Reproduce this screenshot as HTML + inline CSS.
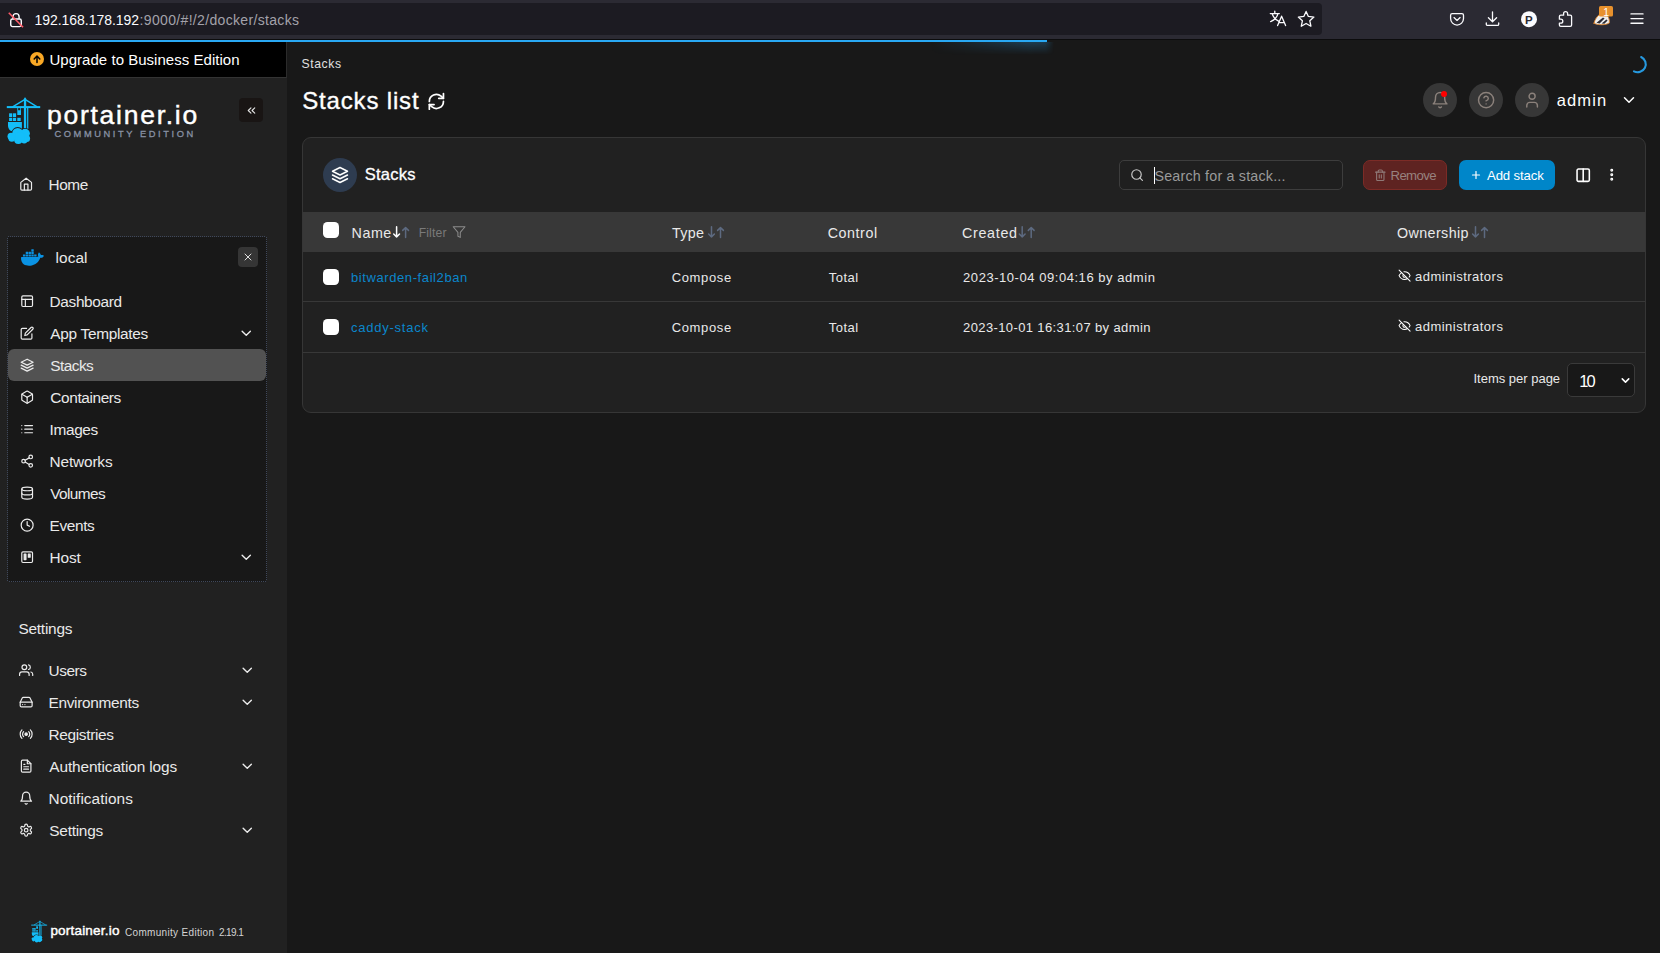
<!DOCTYPE html>
<html lang="en"><head><meta charset="utf-8"><title>Portainer | Stacks</title>
<style>
html,body{margin:0;padding:0;background:#181818;}
body{width:1660px;height:953px;position:relative;overflow:hidden;font-family:"Liberation Sans",sans-serif;color:#fff;}
.t{position:absolute;white-space:nowrap;line-height:30px;height:30px;}
.ic{position:absolute;display:block;overflow:visible;}
.b{position:absolute;box-sizing:border-box;}
</style></head><body>

<div class="b" style="left:0;top:0;width:1660px;height:40px;background:#2b2a33;border-bottom:1px solid #0c0c0d"></div>
<div class="b" style="left:0;top:3px;width:1322px;height:32px;background:#1c1b22;border-radius:0 4px 4px 0"></div>
<svg class="ic" style="left:7.3px;top:10.6px;width:17.6px;height:17.6px" viewBox="0 0 16 16" fill="none"><rect x="3.4" y="7.2" width="9.6" height="7" rx="1.6" stroke="#fbfbfe" stroke-width="1.3"/><path d="M5.4 7V5.2a2.8 2.8 0 0 1 5.6 0V7" stroke="#fbfbfe" stroke-width="1.3"/><line x1="1.6" y1="1.6" x2="14.6" y2="14.8" stroke="#ff5a68" stroke-width="1.4"/></svg>
<div class="t" style="left:34.5px;top:4.5px;font-size:14px;color:#fbfbfe;letter-spacing:-0.036px;">192.168.178.192</div>
<div class="t" style="left:139.6px;top:4.5px;font-size:14px;color:#a3a2aa;letter-spacing:0.332px;">:9000/#!/2/docker/stacks</div>
<svg class="ic" style="left:1260px;top:0;width:400px;height:40px" viewBox="1260 0 400 40" fill="none" stroke="#fbfbfe" stroke-width="1.3" stroke-linecap="round" stroke-linejoin="round"><path d="M1270.3 13.6H1279.3M1274.8 11.2V13.6M1277.9 13.6C1277.2 17 1274.6 19.9 1270.6 21.6M1272.2 13.8C1273 16.6 1275.3 19.6 1278.6 21.2"/><path d="M1277.6 25.6L1281.6 16.2L1285.6 25.6M1279 22.6H1284.2"/><path d="M1306.10 11.40L1308.39 16.44L1313.90 17.07L1309.81 20.81L1310.92 26.23L1306.10 23.50L1301.28 26.23L1302.39 20.81L1298.30 17.07L1303.81 16.44Z"/><path d="M1452.2 13.6H1461.9A1.6 1.6 0 0 1 1463.5 15.2V18.6A6.45 6.45 0 0 1 1450.6 18.6V15.2A1.6 1.6 0 0 1 1452.2 13.6Z"/><path d="M1454 17.6L1457.05 20.4L1460.1 17.6"/><path d="M1492.5 11.8V21.6M1488.4 17.8L1492.5 21.8L1496.6 17.8M1486.3 23V24.2A1.2 1.2 0 0 0 1487.5 25.4H1497.5A1.2 1.2 0 0 0 1498.7 24.2V23"/><circle cx="1529" cy="19.2" r="8" fill="#fbfbfe" stroke="none"/><path d="M1563.6 15.2V13.6A2 2 0 0 1 1567.6 13.6V15.2H1570.2A1.4 1.4 0 0 1 1571.6 16.6V25A1.4 1.4 0 0 1 1570.2 26.4H1560.8A1.4 1.4 0 0 1 1559.4 25V23.2H1560.8A2 2 0 0 0 1560.8 19.2H1559.4V16.6A1.4 1.4 0 0 1 1560.8 15.2Z"/><path d="M1594 23.2C1594.5 20 1597.5 15.5 1600 14.2L1607.5 15.5C1609 17.5 1609.6 20.5 1609.3 23C1606 25.2 1598 25.4 1594 23.2Z" stroke="#d9822b" stroke-width="0.9" fill="#efefef"/><path d="M1596.5 22.8L1603 17.4L1604.6 18.6L1599.6 23.6Z M1601.6 23.6L1606.4 19.4L1607.6 20.6L1604.4 23.8Z" fill="#2b2a33" stroke="none"/><rect x="1599" y="6" width="14" height="10.6" rx="1.6" fill="#e8912d" stroke="none"/><path d="M1631 13.9H1643M1631 18.6H1643M1631 23.2H1643" stroke-width="1.4"/></svg><div class="t" style="left:1525.1px;top:4.6px;font-size:11.5px;color:#2b2a33;font-weight:700;">P</div><div class="t" style="left:1603.2px;top:-3.5px;font-size:10.5px;color:#fff;">1</div>
<div class="b" style="left:0;top:40px;width:1047px;height:2px;background:#29a8f3"></div>
<div class="b" style="left:930px;top:42px;width:124px;height:13px;background:linear-gradient(to right, rgba(41,160,235,0), rgba(41,160,235,.10) 30%, rgba(41,160,235,.30) 80%, rgba(41,160,235,.28) 93%, rgba(41,160,235,0) 100%);-webkit-mask-image:linear-gradient(to bottom, rgba(0,0,0,.9), rgba(0,0,0,.45) 45%, rgba(0,0,0,0));mask-image:linear-gradient(to bottom, rgba(0,0,0,.9), rgba(0,0,0,.45) 45%, rgba(0,0,0,0))"></div>
<div class="b" style="left:0;top:42px;width:287px;height:911px;background:#212121"></div>
<div class="b" style="left:0;top:42px;width:287px;height:36px;background:#000;border-bottom:1px solid #333;border-right:1px solid #2b2b2b"></div>
<svg class="ic" style="left:30px;top:52px;width:14px;height:14px" viewBox="0 0 24 24"><circle cx="12" cy="12" r="12" fill="#f9a825"/><path d="M12 18V7.5M7.2 12 12 7 16.8 12" fill="none" stroke="#000" stroke-width="2.6" stroke-linecap="round" stroke-linejoin="round"/></svg>
<div class="t" style="left:49.5px;top:44.5px;font-size:15px;color:#fff;letter-spacing:0.028px;">Upgrade to Business Edition</div>
<svg class="ic" style="left:0;top:92px;width:60px;height:58px" viewBox="0 92 60 58"><rect x="23.9" y="98.6" width="2.3" height="29.6" fill="#13bef9"/><rect x="24.2" y="97.7" width="1.7" height="1.5" fill="#13bef9"/><rect x="27.1" y="107.5" width="1.2" height="21.4" fill="#13bef9"/><rect x="6.8" y="106.1" width="33.4" height="2" fill="#13bef9"/><path d="M25 99.3 L12.6 106.8 M25 99.3 L37.2 106.8" stroke="#13bef9" stroke-width="1.35" fill="none"/><path d="M17.3 108H18.1V110.2H20.3V108H21V114.9H17.3Z" fill="#13bef9"/><rect x="9.1" y="113.3" width="3.1" height="3.7" fill="#13bef9"/><rect x="12.9" y="113.3" width="3.2" height="3.7" fill="#13bef9"/><rect x="9.1" y="117.8" width="3.1" height="3.2" fill="#13bef9"/><rect x="12.9" y="117.8" width="3.2" height="3.2" fill="#13bef9"/><rect x="17.3" y="117.8" width="3.4" height="3.2" fill="#13bef9"/><path d="M8 122.1H21.9V127.5C21.9 130 20 131.5 17 131.5H13.5C10 131.5 8 128.5 8 125.5Z" fill="#13bef9"/><circle cx="11" cy="136.2" r="4.4" fill="#212121"/><circle cx="17.7" cy="133.5" r="6.4" fill="#212121"/><circle cx="25.2" cy="133.5" r="5.6000000000000005" fill="#212121"/><circle cx="26.6" cy="138.4" r="4.4" fill="#212121"/><circle cx="18.3" cy="140" r="5.0" fill="#212121"/><circle cx="24.2" cy="140" r="4.3" fill="#212121"/><circle cx="11.8" cy="138.4" r="4.2" fill="#212121"/><circle cx="20" cy="137" r="5.9" fill="#212121"/><circle cx="11" cy="136.2" r="3.5" fill="#13bef9"/><circle cx="17.7" cy="133.5" r="5.5" fill="#13bef9"/><circle cx="25.2" cy="133.5" r="4.7" fill="#13bef9"/><circle cx="26.6" cy="138.4" r="3.5" fill="#13bef9"/><circle cx="18.3" cy="140" r="4.1" fill="#13bef9"/><circle cx="24.2" cy="140" r="3.4" fill="#13bef9"/><circle cx="11.8" cy="138.4" r="3.3" fill="#13bef9"/><circle cx="20" cy="137" r="5" fill="#13bef9"/></svg>
<div class="t" style="left:47px;top:99.5px;font-size:26.5px;color:#fff;letter-spacing:1.734px;-webkit-text-stroke:0.45px #fff;">portainer.io</div>
<div class="t" style="left:54.5px;top:118.5px;font-size:9.3px;color:#8891a4;letter-spacing:2.578px;-webkit-text-stroke:0.3px #8891a4;">COMMUNITY EDITION</div>
<div class="b" style="left:239px;top:98px;width:24px;height:24px;background:#191514;border-radius:4px"></div>
<svg class="ic" style="left:244.5px;top:103.5px;width:13px;height:13px;color:#e6e6e6" viewBox="0 0 24 24" fill="none" stroke="currentColor" stroke-width="2" stroke-linecap="round" stroke-linejoin="round"><polyline points="11 17 6 12 11 7"/><polyline points="18 17 13 12 18 7"/></svg>
<svg class="ic" style="left:18.55px;top:176.85px;width:14.3px;height:14.3px;color:#ececec" viewBox="0 0 24 24" fill="none" stroke="currentColor" stroke-width="2" stroke-linecap="round" stroke-linejoin="round"><path d="m3 9 9-7 9 7v11a2 2 0 0 1-2 2H5a2 2 0 0 1-2-2z"/><polyline points="9 22 9 12 15 12 15 22"/></svg>
<div class="t" style="left:48.5px;top:170px;font-size:15.4px;color:#e9e9e9;letter-spacing:-0.421px;">Home</div>
<svg class="ic" style="left:0;top:230px;width:280px;height:360px" viewBox="0 230 280 360"><rect x="7.5" y="236.5" width="259" height="345" rx="2" fill="#181818" stroke="#3f485b" stroke-width="1" stroke-dasharray="1 1" shape-rendering="crispEdges"/></svg>
<svg class="ic" style="left:21.1px;top:246.27px;width:22.9px;height:22.9px" viewBox="0 0 24 24"><path d="M13.983 11.078h2.119a.186.186 0 00.186-.185V9.006a.186.186 0 00-.186-.186h-2.119a.185.185 0 00-.185.185v1.888c0 .102.083.185.185.185m-2.954-5.43h2.118a.186.186 0 00.186-.186V3.574a.186.186 0 00-.186-.185h-2.118a.185.185 0 00-.185.185v1.888c0 .102.082.185.185.185m0 2.716h2.118a.187.187 0 00.186-.186V6.29a.186.186 0 00-.186-.185h-2.118a.185.185 0 00-.185.185v1.887c0 .102.082.185.185.186m-2.93 0h2.12a.186.186 0 00.184-.186V6.29a.185.185 0 00-.185-.185H8.1a.185.185 0 00-.185.185v1.887c0 .102.083.185.185.186m-2.964 0h2.119a.186.186 0 00.185-.186V6.29a.185.185 0 00-.185-.185H5.136a.186.186 0 00-.186.185v1.887c0 .102.084.185.186.186m5.893 2.715h2.118a.186.186 0 00.186-.185V9.006a.186.186 0 00-.186-.186h-2.118a.185.185 0 00-.185.185v1.888c0 .102.082.185.185.185m-2.93 0h2.12a.185.185 0 00.184-.185V9.006a.185.185 0 00-.184-.186h-2.12a.185.185 0 00-.184.185v1.888c0 .102.083.185.185.185m-2.964 0h2.119a.185.185 0 00.185-.185V9.006a.185.185 0 00-.184-.186h-2.12a.186.186 0 00-.186.186v1.887c0 .102.084.185.186.185m-2.92 0h2.12a.185.185 0 00.184-.185V9.006a.185.185 0 00-.184-.186h-2.12a.185.185 0 00-.184.185v1.888c0 .102.082.185.185.185M23.763 9.89c-.065-.051-.672-.51-1.954-.51-.338.001-.676.03-1.01.087-.248-1.7-1.653-2.53-1.716-2.566l-.344-.199-.226.327c-.284.438-.49.922-.612 1.43-.23.97-.09 1.882.403 2.661-.595.332-1.55.413-1.744.42H.751a.751.751 0 00-.75.748 11.376 11.376 0 00.692 4.062c.545 1.428 1.355 2.48 2.41 3.124 1.18.723 3.1 1.137 5.275 1.137.983.003 1.963-.086 2.93-.266a12.248 12.248 0 003.823-1.389c.98-.567 1.86-1.288 2.61-2.136 1.252-1.418 1.998-2.997 2.553-4.4h.221c1.372 0 2.215-.549 2.68-1.009.309-.293.55-.65.707-1.046l.098-.288Z" fill="#0a92e3"/></svg>
<div class="t" style="left:55.5px;top:242.5px;font-size:15.4px;color:#e9e9e9;letter-spacing:0.086px;">local</div>
<div class="b" style="left:238px;top:247px;width:20px;height:20px;background:#353535;border-radius:4px"></div>
<svg class="ic" style="left:242px;top:251px;width:12px;height:12px;color:#f0f0f0" viewBox="0 0 24 24" fill="none" stroke="currentColor" stroke-width="1.8" stroke-linecap="round" stroke-linejoin="round"><line x1="18" y1="6" x2="6" y2="18"/><line x1="6" y1="6" x2="18" y2="18"/></svg>
<div class="b" style="left:8px;top:349px;width:258px;height:32px;background:#525252;border-radius:6px"></div>
<svg class="ic" style="left:19.85px;top:293.85px;width:14.3px;height:14.3px;color:#ececec" viewBox="0 0 24 24" fill="none" stroke="currentColor" stroke-width="2" stroke-linecap="round" stroke-linejoin="round"><rect x="3" y="3" width="18" height="18" rx="2"/><line x1="3" y1="9" x2="21" y2="9"/><line x1="9" y1="21" x2="9" y2="9"/></svg>
<div class="t" style="left:49.6px;top:287px;font-size:15.4px;color:#e9e9e9;letter-spacing:-0.35px;">Dashboard</div>
<svg class="ic" style="left:19.85px;top:325.85px;width:14.3px;height:14.3px;color:#ececec" viewBox="0 0 24 24" fill="none" stroke="currentColor" stroke-width="2" stroke-linecap="round" stroke-linejoin="round"><path d="M11 4H4a2 2 0 0 0-2 2v14a2 2 0 0 0 2 2h14a2 2 0 0 0 2-2v-7"/><path d="M18.5 2.5a2.121 2.121 0 0 1 3 3L12 15l-4 1 1-4 9.5-9.5z"/></svg>
<div class="t" style="left:50.3px;top:319px;font-size:15.4px;color:#e9e9e9;letter-spacing:-0.294px;">App Templates</div>
<svg class="ic" style="left:237.85px;top:324.75px;width:16.5px;height:16.5px;color:#ececec" viewBox="0 0 24 24" fill="none" stroke="currentColor" stroke-width="2" stroke-linecap="round" stroke-linejoin="round"><polyline points="6 9 12 15 18 9"/></svg>
<svg class="ic" style="left:19.85px;top:357.85px;width:14.3px;height:14.3px;color:#ececec" viewBox="0 0 24 24" fill="none" stroke="currentColor" stroke-width="2" stroke-linecap="round" stroke-linejoin="round"><polygon points="12 2 2 7 12 12 22 7 12 2"/><polyline points="2 17 12 22 22 17"/><polyline points="2 12 12 17 22 12"/></svg>
<div class="t" style="left:50.3px;top:351px;font-size:15.4px;color:#e9e9e9;letter-spacing:-0.537px;">Stacks</div>
<svg class="ic" style="left:19.85px;top:389.85px;width:14.3px;height:14.3px;color:#ececec" viewBox="0 0 24 24" fill="none" stroke="currentColor" stroke-width="2" stroke-linecap="round" stroke-linejoin="round"><path d="M21 16V8a2 2 0 0 0-1-1.73l-7-4a2 2 0 0 0-2 0l-7 4A2 2 0 0 0 3 8v8a2 2 0 0 0 1 1.73l7 4a2 2 0 0 0 2 0l7-4A2 2 0 0 0 21 16z"/><polyline points="3.27 6.96 12 12.01 20.73 6.96"/><line x1="12" y1="22.08" x2="12" y2="12"/></svg>
<div class="t" style="left:50.3px;top:383px;font-size:15.4px;color:#e9e9e9;letter-spacing:-0.382px;">Containers</div>
<svg class="ic" style="left:19.85px;top:421.85px;width:14.3px;height:14.3px;color:#ececec" viewBox="0 0 24 24" fill="none" stroke="currentColor" stroke-width="2" stroke-linecap="round" stroke-linejoin="round"><line x1="8" y1="6" x2="21" y2="6"/><line x1="8" y1="12" x2="21" y2="12"/><line x1="8" y1="18" x2="21" y2="18"/><line x1="3" y1="6" x2="3.01" y2="6"/><line x1="3" y1="12" x2="3.01" y2="12"/><line x1="3" y1="18" x2="3.01" y2="18"/></svg>
<div class="t" style="left:49.5px;top:415px;font-size:15.4px;color:#e9e9e9;letter-spacing:-0.337px;">Images</div>
<svg class="ic" style="left:19.85px;top:453.85px;width:14.3px;height:14.3px;color:#ececec" viewBox="0 0 24 24" fill="none" stroke="currentColor" stroke-width="2" stroke-linecap="round" stroke-linejoin="round"><circle cx="18" cy="5" r="3"/><circle cx="6" cy="12" r="3"/><circle cx="18" cy="19" r="3"/><line x1="8.59" y1="13.51" x2="15.42" y2="17.49"/><line x1="15.41" y1="6.51" x2="8.59" y2="10.49"/></svg>
<div class="t" style="left:49.5px;top:447px;font-size:15.4px;color:#e9e9e9;letter-spacing:-0.149px;">Networks</div>
<svg class="ic" style="left:19.85px;top:485.85px;width:14.3px;height:14.3px;color:#ececec" viewBox="0 0 24 24" fill="none" stroke="currentColor" stroke-width="2" stroke-linecap="round" stroke-linejoin="round"><ellipse cx="12" cy="5" rx="9" ry="3"/><path d="M21 12c0 1.66-4 3-9 3s-9-1.34-9-3"/><path d="M3 5v14c0 1.66 4 3 9 3s9-1.34 9-3V5"/></svg>
<div class="t" style="left:50.3px;top:479px;font-size:15.4px;color:#e9e9e9;letter-spacing:-0.622px;">Volumes</div>
<svg class="ic" style="left:19.85px;top:517.85px;width:14.3px;height:14.3px;color:#ececec" viewBox="0 0 24 24" fill="none" stroke="currentColor" stroke-width="2" stroke-linecap="round" stroke-linejoin="round"><circle cx="12" cy="12" r="10"/><polyline points="12 6 12 12 16 14"/></svg>
<div class="t" style="left:49.5px;top:511px;font-size:15.4px;color:#e9e9e9;letter-spacing:-0.353px;">Events</div>
<svg class="ic" style="left:19.85px;top:549.85px;width:14.3px;height:14.3px;color:#ececec" viewBox="0 0 24 24" fill="none" stroke="currentColor" stroke-width="2" stroke-linecap="round" stroke-linejoin="round"><rect x="3" y="3" width="18" height="18" rx="2" ry="2"/><rect x="7" y="7" width="3" height="9" fill="currentColor"/><rect x="14" y="7" width="3" height="5" fill="currentColor"/></svg>
<div class="t" style="left:49.5px;top:543px;font-size:15.4px;color:#e9e9e9;letter-spacing:-0.119px;">Host</div>
<svg class="ic" style="left:237.85px;top:548.75px;width:16.5px;height:16.5px;color:#ececec" viewBox="0 0 24 24" fill="none" stroke="currentColor" stroke-width="2" stroke-linecap="round" stroke-linejoin="round"><polyline points="6 9 12 15 18 9"/></svg>
<div class="t" style="left:18.5px;top:614px;font-size:15.4px;color:#e9e9e9;letter-spacing:-0.246px;">Settings</div>
<svg class="ic" style="left:18.85px;top:662.85px;width:14.3px;height:14.3px;color:#ececec" viewBox="0 0 24 24" fill="none" stroke="currentColor" stroke-width="2" stroke-linecap="round" stroke-linejoin="round"><path d="M17 21v-2a4 4 0 0 0-4-4H5a4 4 0 0 0-4 4v2"/><circle cx="9" cy="7" r="4"/><path d="M23 21v-2a4 4 0 0 0-3-3.87"/><path d="M16 3.13a4 4 0 0 1 0 7.75"/></svg>
<div class="t" style="left:48.5px;top:656px;font-size:15.4px;color:#e9e9e9;letter-spacing:-0.426px;">Users</div>
<svg class="ic" style="left:238.75px;top:661.75px;width:16.5px;height:16.5px;color:#ececec" viewBox="0 0 24 24" fill="none" stroke="currentColor" stroke-width="2" stroke-linecap="round" stroke-linejoin="round"><polyline points="6 9 12 15 18 9"/></svg>
<svg class="ic" style="left:18.85px;top:694.85px;width:14.3px;height:14.3px;color:#ececec" viewBox="0 0 24 24" fill="none" stroke="currentColor" stroke-width="2" stroke-linecap="round" stroke-linejoin="round"><line x1="22" y1="12" x2="2" y2="12"/><path d="M5.45 5.11 2 12v6a2 2 0 0 0 2 2h16a2 2 0 0 0 2-2v-6l-3.45-6.89A2 2 0 0 0 16.76 4H7.24a2 2 0 0 0-1.79 1.11z"/><line x1="6" y1="16" x2="6.01" y2="16"/><line x1="10" y1="16" x2="10.01" y2="16"/></svg>
<div class="t" style="left:48.5px;top:688px;font-size:15.4px;color:#e9e9e9;letter-spacing:-0.31px;">Environments</div>
<svg class="ic" style="left:238.75px;top:693.75px;width:16.5px;height:16.5px;color:#ececec" viewBox="0 0 24 24" fill="none" stroke="currentColor" stroke-width="2" stroke-linecap="round" stroke-linejoin="round"><polyline points="6 9 12 15 18 9"/></svg>
<svg class="ic" style="left:18.85px;top:726.85px;width:14.3px;height:14.3px;color:#ececec" viewBox="0 0 24 24" fill="none" stroke="currentColor" stroke-width="2" stroke-linecap="round" stroke-linejoin="round"><circle cx="12" cy="12" r="2" fill="currentColor"/><path d="M16.24 7.76a6 6 0 0 1 0 8.49m-8.48-.01a6 6 0 0 1 0-8.49m11.31-2.82a10 10 0 0 1 0 14.14m-14.14 0a10 10 0 0 1 0-14.14"/></svg>
<div class="t" style="left:48.5px;top:720px;font-size:15.4px;color:#e9e9e9;letter-spacing:-0.326px;">Registries</div>
<svg class="ic" style="left:18.85px;top:758.85px;width:14.3px;height:14.3px;color:#ececec" viewBox="0 0 24 24" fill="none" stroke="currentColor" stroke-width="2" stroke-linecap="round" stroke-linejoin="round"><path d="M14 2H6a2 2 0 0 0-2 2v16a2 2 0 0 0 2 2h12a2 2 0 0 0 2-2V8z"/><polyline points="14 2 14 8 20 8"/><line x1="16" y1="13" x2="8" y2="13"/><line x1="16" y1="17" x2="8" y2="17"/><line x1="10" y1="9" x2="8" y2="9"/></svg>
<div class="t" style="left:49.3px;top:752px;font-size:15.4px;color:#e9e9e9;letter-spacing:-0.12px;">Authentication logs</div>
<svg class="ic" style="left:238.75px;top:757.75px;width:16.5px;height:16.5px;color:#ececec" viewBox="0 0 24 24" fill="none" stroke="currentColor" stroke-width="2" stroke-linecap="round" stroke-linejoin="round"><polyline points="6 9 12 15 18 9"/></svg>
<svg class="ic" style="left:18.85px;top:790.85px;width:14.3px;height:14.3px;color:#ececec" viewBox="0 0 24 24" fill="none" stroke="currentColor" stroke-width="2" stroke-linecap="round" stroke-linejoin="round"><path d="M18 8A6 6 0 0 0 6 8c0 7-3 9-3 9h18s-3-2-3-9"/><path d="M13.73 21a2 2 0 0 1-3.46 0"/></svg>
<div class="t" style="left:48.5px;top:784px;font-size:15.4px;color:#e9e9e9;letter-spacing:0.046px;">Notifications</div>
<svg class="ic" style="left:18.85px;top:822.85px;width:14.3px;height:14.3px;color:#ececec" viewBox="0 0 24 24" fill="none" stroke="currentColor" stroke-width="2" stroke-linecap="round" stroke-linejoin="round"><path d="M12.22 2h-.44a2 2 0 0 0-2 2v.18a2 2 0 0 1-1 1.73l-.43.25a2 2 0 0 1-2 0l-.15-.08a2 2 0 0 0-2.73.73l-.22.38a2 2 0 0 0 .73 2.73l.15.1a2 2 0 0 1 1 1.72v.51a2 2 0 0 1-1 1.74l-.15.09a2 2 0 0 0-.73 2.73l.22.38a2 2 0 0 0 2.73.73l.15-.08a2 2 0 0 1 2 0l.43.25a2 2 0 0 1 1 1.73V20a2 2 0 0 0 2 2h.44a2 2 0 0 0 2-2v-.18a2 2 0 0 1 1-1.73l.43-.25a2 2 0 0 1 2 0l.15.08a2 2 0 0 0 2.73-.73l.22-.39a2 2 0 0 0-.73-2.73l-.15-.08a2 2 0 0 1-1-1.74v-.5a2 2 0 0 1 1-1.74l.15-.09a2 2 0 0 0 .73-2.73l-.22-.38a2 2 0 0 0-2.73-.73l-.15.08a2 2 0 0 1-2 0l-.43-.25a2 2 0 0 1-1-1.73V4a2 2 0 0 0-2-2z"/><circle cx="12" cy="12" r="3"/></svg>
<div class="t" style="left:49.3px;top:816px;font-size:15.4px;color:#e9e9e9;letter-spacing:-0.246px;">Settings</div>
<svg class="ic" style="left:238.75px;top:821.75px;width:16.5px;height:16.5px;color:#ececec" viewBox="0 0 24 24" fill="none" stroke="currentColor" stroke-width="2" stroke-linecap="round" stroke-linejoin="round"><polyline points="6 9 12 15 18 9"/></svg>
<svg class="ic" style="left:27.56px;top:918.32px;width:28.56px;height:27.31px" viewBox="0 92 60 58" preserveAspectRatio="none"><rect x="23.9" y="98.6" width="2.3" height="29.6" fill="#13bef9"/><rect x="24.2" y="97.7" width="1.7" height="1.5" fill="#13bef9"/><rect x="27.1" y="107.5" width="1.2" height="21.4" fill="#13bef9"/><rect x="6.8" y="106.1" width="33.4" height="2" fill="#13bef9"/><path d="M25 99.3 L12.6 106.8 M25 99.3 L37.2 106.8" stroke="#13bef9" stroke-width="1.35" fill="none"/><path d="M17.3 108H18.1V110.2H20.3V108H21V114.9H17.3Z" fill="#13bef9"/><rect x="9.1" y="113.3" width="3.1" height="3.7" fill="#13bef9"/><rect x="12.9" y="113.3" width="3.2" height="3.7" fill="#13bef9"/><rect x="9.1" y="117.8" width="3.1" height="3.2" fill="#13bef9"/><rect x="12.9" y="117.8" width="3.2" height="3.2" fill="#13bef9"/><rect x="17.3" y="117.8" width="3.4" height="3.2" fill="#13bef9"/><path d="M8 122.1H21.9V127.5C21.9 130 20 131.5 17 131.5H13.5C10 131.5 8 128.5 8 125.5Z" fill="#13bef9"/><circle cx="11" cy="136.2" r="4.4" fill="#212121"/><circle cx="17.7" cy="133.5" r="6.4" fill="#212121"/><circle cx="25.2" cy="133.5" r="5.6000000000000005" fill="#212121"/><circle cx="26.6" cy="138.4" r="4.4" fill="#212121"/><circle cx="18.3" cy="140" r="5.0" fill="#212121"/><circle cx="24.2" cy="140" r="4.3" fill="#212121"/><circle cx="11.8" cy="138.4" r="4.2" fill="#212121"/><circle cx="20" cy="137" r="5.9" fill="#212121"/><circle cx="11" cy="136.2" r="3.5" fill="#13bef9"/><circle cx="17.7" cy="133.5" r="5.5" fill="#13bef9"/><circle cx="25.2" cy="133.5" r="4.7" fill="#13bef9"/><circle cx="26.6" cy="138.4" r="3.5" fill="#13bef9"/><circle cx="18.3" cy="140" r="4.1" fill="#13bef9"/><circle cx="24.2" cy="140" r="3.4" fill="#13bef9"/><circle cx="11.8" cy="138.4" r="3.3" fill="#13bef9"/><circle cx="20" cy="137" r="5" fill="#13bef9"/></svg>
<div class="t" style="left:50.4px;top:916px;font-size:13.5px;color:#fff;letter-spacing:0.2px;-webkit-text-stroke:0.45px #fff;">portainer.io</div>
<div class="t" style="left:125px;top:918px;font-size:10px;color:#d4d4d4;letter-spacing:0.317px;">Community Edition</div>
<div class="t" style="left:218.9px;top:918px;font-size:10px;color:#d4d4d4;letter-spacing:-0.562px;">2.19.1</div>
<div class="t" style="left:301.5px;top:49px;font-size:12.2px;color:#e0e0e0;letter-spacing:0.604px;">Stacks</div>
<div class="t" style="left:302.2px;top:85.5px;font-size:24px;color:#fff;letter-spacing:0.837px;-webkit-text-stroke:0.35px #fff;">Stacks list</div>
<svg class="ic" style="left:427.4px;top:91.5px;width:18.8px;height:18.8px;color:#fff" viewBox="0 0 24 24" fill="none" stroke="currentColor" stroke-width="2.2" stroke-linecap="round" stroke-linejoin="round"><path d="M21 2v6h-6"/><path d="M3 12a9 9 0 0 1 15-6.7L21 8"/><path d="M3 22v-6h6"/><path d="M21 12a9 9 0 0 1-15 6.7L3 16"/></svg>
<svg class="ic" style="left:1620px;top:50px;width:30px;height:30px" viewBox="1620 50 30 30" fill="none"><path d="M1641.15 57.0A8.2 8.0 0 0 1 1633.96 71.4" stroke="#2699df" stroke-width="2.1" stroke-linecap="round"/></svg>
<div class="b" style="left:1422.75px;top:82.75px;width:34.5px;height:34.5px;border-radius:50%;background:#373737"></div>
<svg class="ic" style="left:1430.9px;top:90.9px;width:18.2px;height:18.2px;color:#8b817b" viewBox="0 0 24 24" fill="none" stroke="currentColor" stroke-width="1.9" stroke-linecap="round" stroke-linejoin="round"><path d="M18 8A6 6 0 0 0 6 8c0 7-3 9-3 9h18s-3-2-3-9"/><path d="M13.73 21a2 2 0 0 1-3.46 0"/></svg>
<div class="b" style="left:1468.75px;top:82.75px;width:34.5px;height:34.5px;border-radius:50%;background:#373737"></div>
<svg class="ic" style="left:1476.9px;top:90.9px;width:18.2px;height:18.2px;color:#8b817b" viewBox="0 0 24 24" fill="none" stroke="currentColor" stroke-width="1.9" stroke-linecap="round" stroke-linejoin="round"><circle cx="12" cy="12" r="10"/><path d="M9.09 9a3 3 0 0 1 5.83 1c0 2-3 3-3 3"/><line x1="12" y1="17" x2="12.01" y2="17"/></svg>
<div class="b" style="left:1514.75px;top:82.75px;width:34.5px;height:34.5px;border-radius:50%;background:#373737"></div>
<svg class="ic" style="left:1522.9px;top:90.9px;width:18.2px;height:18.2px;color:#8b817b" viewBox="0 0 24 24" fill="none" stroke="currentColor" stroke-width="1.9" stroke-linecap="round" stroke-linejoin="round"><path d="M19 21v-2a4 4 0 0 0-4-4H9a4 4 0 0 0-4 4v2"/><circle cx="12" cy="7" r="4"/></svg>
<div class="b" style="left:1441px;top:91px;width:6.4px;height:6.4px;border-radius:50%;background:#ff0000"></div>
<div class="t" style="left:1556.7px;top:84.5px;font-size:16.5px;color:#fff;letter-spacing:1.162px;">admin</div>
<svg class="ic" style="left:1620px;top:91.2px;width:18px;height:18px;color:#fff" viewBox="0 0 24 24" fill="none" stroke="currentColor" stroke-width="2" stroke-linecap="round" stroke-linejoin="round"><polyline points="6 9 12 15 18 9"/></svg>
<div class="b" style="left:302px;top:137px;width:1344px;height:276px;background:#212121;border:1px solid #363636;border-radius:9px"></div>
<div class="b" style="left:322.9px;top:157.8px;width:34.4px;height:34.4px;border-radius:50%;background:#2e3c50"></div>
<svg class="ic" style="left:331.1px;top:166px;width:18px;height:18px;color:#fff" viewBox="0 0 24 24" fill="none" stroke="currentColor" stroke-width="2" stroke-linecap="round" stroke-linejoin="round"><polygon points="12 2 2 7 12 12 22 7 12 2"/><polyline points="2 17 12 22 22 17"/><polyline points="2 12 12 17 22 12"/></svg>
<div class="t" style="left:364.7px;top:158.5px;font-size:16.5px;color:#fff;letter-spacing:0.254px;-webkit-text-stroke:0.3px #fff;">Stacks</div>
<div class="b" style="left:1119px;top:160px;width:224px;height:30px;background:#1f1f1f;border:1px solid #3d3d3d;border-radius:5px"></div>
<svg class="ic" style="left:1130.1px;top:168.1px;width:14.2px;height:14.2px;color:#c8c8c8" viewBox="0 0 24 24" fill="none" stroke="currentColor" stroke-width="2" stroke-linecap="round" stroke-linejoin="round"><circle cx="11" cy="11" r="8"/><line x1="21" y1="21" x2="16.65" y2="16.65"/></svg>
<div class="b" style="left:1154px;top:166.5px;width:1px;height:17.5px;background:#fff"></div>
<div class="t" style="left:1154.5px;top:160.5px;font-size:14.3px;color:#9a9a9a;letter-spacing:0.193px;">Search for a stack...</div>
<div class="b" style="left:1363px;top:160px;width:83.6px;height:30px;background:#5e2321;border:1px solid #7c2b26;border-radius:7px"></div>
<svg class="ic" style="left:1373.7px;top:168.7px;width:12.6px;height:12.6px;color:#8f7977" viewBox="0 0 24 24" fill="none" stroke="currentColor" stroke-width="2.1" stroke-linecap="round" stroke-linejoin="round"><path d="M3 6h18"/><path d="M19 6v14a2 2 0 0 1-2 2H7a2 2 0 0 1-2-2V6m3 0V4a2 2 0 0 1 2-2h4a2 2 0 0 1 2 2v2"/><line x1="10" y1="11" x2="10" y2="17"/><line x1="14" y1="11" x2="14" y2="17"/></svg>
<div class="t" style="left:1390.5px;top:160.5px;font-size:13.2px;color:#97827f;letter-spacing:-0.622px;">Remove</div>
<div class="b" style="left:1459px;top:160px;width:96px;height:30px;background:#0086c9;border-radius:7px"></div>
<svg class="ic" style="left:1470px;top:169px;width:12px;height:12px;color:#fff" viewBox="0 0 24 24" fill="none" stroke="currentColor" stroke-width="2.4" stroke-linecap="round" stroke-linejoin="round"><line x1="12" y1="5" x2="12" y2="19"/><line x1="5" y1="12" x2="19" y2="12"/></svg>
<div class="t" style="left:1487px;top:160.5px;font-size:13.2px;color:#fff;letter-spacing:-0.14px;">Add stack</div>
<svg class="ic" style="left:1574.8px;top:166.8px;width:16.4px;height:16.4px;color:#fff" viewBox="0 0 24 24" fill="none" stroke="currentColor" stroke-width="2.3" stroke-linecap="round" stroke-linejoin="round"><rect x="3" y="3" width="18" height="18" rx="2"/><line x1="12" y1="3" x2="12" y2="21"/></svg>
<svg class="ic" style="left:1603.85px;top:167.05px;width:15.5px;height:15.5px;color:#fff" viewBox="0 0 24 24" fill="none" stroke="currentColor" stroke-width="2.6" stroke-linecap="round" stroke-linejoin="round"><circle cx="12" cy="12" r="1"/><circle cx="12" cy="5" r="1"/><circle cx="12" cy="19" r="1"/></svg>
<div class="b" style="left:303px;top:212px;width:1342px;height:40px;background:#383838"></div>
<div class="b" style="left:323px;top:222px;width:16.3px;height:16.2px;background:#fff;border-radius:4.5px"></div>
<div class="t" style="left:351.5px;top:217.5px;font-size:14.3px;color:#e9e9e9;letter-spacing:0.553px;">Name</div>
<svg class="ic" style="left:0;top:0;width:1660px;height:953px;pointer-events:none" viewBox="0 0 1660 953" fill="none" stroke-width="1.5" stroke-linecap="round" stroke-linejoin="round"><path d="M396.6 226.8V236.9M393.7 234L396.6 236.9L399.5 234" stroke="#fff"/><path d="M405.6 237.6V227.5M402.7 230.4L405.6 227.5L408.5 230.4" stroke="#5d6a80"/></svg>
<div class="t" style="left:672px;top:217.5px;font-size:14.3px;color:#e9e9e9;letter-spacing:0.333px;">Type</div>
<svg class="ic" style="left:0;top:0;width:1660px;height:953px;pointer-events:none" viewBox="0 0 1660 953" fill="none" stroke-width="1.5" stroke-linecap="round" stroke-linejoin="round"><path d="M711.5 226.8V236.9M708.6 234L711.5 236.9L714.4 234" stroke="#5d6a80"/><path d="M720.5 237.6V227.5M717.6 230.4L720.5 227.5L723.4 230.4" stroke="#5d6a80"/></svg>
<div class="t" style="left:827.7px;top:217.5px;font-size:14.3px;color:#e9e9e9;letter-spacing:0.551px;">Control</div>
<div class="t" style="left:962px;top:217.5px;font-size:14.3px;color:#e9e9e9;letter-spacing:0.688px;">Created</div>
<svg class="ic" style="left:0;top:0;width:1660px;height:953px;pointer-events:none" viewBox="0 0 1660 953" fill="none" stroke-width="1.5" stroke-linecap="round" stroke-linejoin="round"><path d="M1022.2 226.8V236.9M1019.3 234L1022.2 236.9L1025.1 234" stroke="#5d6a80"/><path d="M1031.2 237.6V227.5M1028.3 230.4L1031.2 227.5L1034.1 230.4" stroke="#5d6a80"/></svg>
<div class="t" style="left:1397px;top:217.5px;font-size:14.3px;color:#e9e9e9;letter-spacing:0.395px;">Ownership</div>
<svg class="ic" style="left:0;top:0;width:1660px;height:953px;pointer-events:none" viewBox="0 0 1660 953" fill="none" stroke-width="1.5" stroke-linecap="round" stroke-linejoin="round"><path d="M1475.5 226.8V236.9M1472.6 234L1475.5 236.9L1478.4 234" stroke="#5d6a80"/><path d="M1484.5 237.6V227.5M1481.6 230.4L1484.5 227.5L1487.4 230.4" stroke="#5d6a80"/></svg>
<div class="t" style="left:418.7px;top:217.7px;font-size:12.2px;color:#7a7a7a;letter-spacing:0.141px;">Filter</div>
<svg class="ic" style="left:452.1px;top:224.9px;width:14.2px;height:14.2px;color:#8c8c8c" viewBox="0 0 24 24" fill="none" stroke="currentColor" stroke-width="1.7" stroke-linecap="round" stroke-linejoin="round"><polygon points="22 3 2 3 10 12.46 10 19 14 21 14 12.46 22 3"/></svg>
<div class="b" style="left:323px;top:269px;width:16.3px;height:16.2px;background:#fff;border-radius:4.5px"></div>
<div class="t" style="left:351px;top:262.5px;font-size:13px;color:#0b86cb;letter-spacing:0.592px;">bitwarden-fail2ban</div>
<div class="t" style="left:671.7px;top:262.5px;font-size:13px;color:#e9e9e9;letter-spacing:0.643px;">Compose</div>
<div class="t" style="left:828.8px;top:262.5px;font-size:13px;color:#e9e9e9;letter-spacing:0.458px;">Total</div>
<div class="t" style="left:963.1px;top:262.5px;font-size:13px;color:#e9e9e9;letter-spacing:0.545px;">2023-10-04 09:04:16 by admin</div>
<svg class="ic" style="left:1398.2px;top:269.2px;width:13.2px;height:13.2px;color:#fff" viewBox="0 0 24 24" fill="none" stroke="currentColor" stroke-width="1.9" stroke-linecap="round" stroke-linejoin="round"><path d="M9.88 9.88a3 3 0 1 0 4.24 4.24"/><path d="M10.73 5.08A10.43 10.43 0 0 1 12 5c7 0 10 7 10 7a13.16 13.16 0 0 1-1.67 2.68"/><path d="M6.61 6.61A13.526 13.526 0 0 0 2 12s3 7 10 7a9.74 9.74 0 0 0 5.39-1.61"/><line x1="2" y1="2" x2="22" y2="22"/></svg>
<div class="t" style="left:1415px;top:261.5px;font-size:13px;color:#e9e9e9;letter-spacing:0.481px;">administrators</div>
<div class="b" style="left:303px;top:301px;width:1342px;height:1px;background:#383838"></div>
<div class="b" style="left:323px;top:319px;width:16.3px;height:16.2px;background:#fff;border-radius:4.5px"></div>
<div class="t" style="left:351px;top:312.5px;font-size:13px;color:#0b86cb;letter-spacing:0.753px;">caddy-stack</div>
<div class="t" style="left:671.7px;top:312.5px;font-size:13px;color:#e9e9e9;letter-spacing:0.643px;">Compose</div>
<div class="t" style="left:828.8px;top:312.5px;font-size:13px;color:#e9e9e9;letter-spacing:0.458px;">Total</div>
<div class="t" style="left:963.1px;top:312.5px;font-size:13px;color:#e9e9e9;letter-spacing:0.379px;">2023-10-01 16:31:07 by admin</div>
<svg class="ic" style="left:1398.2px;top:319.2px;width:13.2px;height:13.2px;color:#fff" viewBox="0 0 24 24" fill="none" stroke="currentColor" stroke-width="1.9" stroke-linecap="round" stroke-linejoin="round"><path d="M9.88 9.88a3 3 0 1 0 4.24 4.24"/><path d="M10.73 5.08A10.43 10.43 0 0 1 12 5c7 0 10 7 10 7a13.16 13.16 0 0 1-1.67 2.68"/><path d="M6.61 6.61A13.526 13.526 0 0 0 2 12s3 7 10 7a9.74 9.74 0 0 0 5.39-1.61"/><line x1="2" y1="2" x2="22" y2="22"/></svg>
<div class="t" style="left:1415px;top:311.5px;font-size:13px;color:#e9e9e9;letter-spacing:0.481px;">administrators</div>
<div class="b" style="left:303px;top:352px;width:1342px;height:1px;background:#383838"></div>
<div class="t" style="left:1473.5px;top:363.5px;font-size:13px;color:#e9e9e9;letter-spacing:-0.009px;">Items per page</div>
<div class="b" style="left:1567px;top:363px;width:68px;height:34px;background:#181818;border:1px solid #3a3a3a;border-radius:5px"></div>
<div class="t" style="left:1579.3px;top:365.5px;font-size:16.5px;color:#fff;letter-spacing:-1.859px;">10</div>
<svg class="ic" style="left:1618.5px;top:374.2px;width:13px;height:13px;color:#fff" viewBox="0 0 24 24" fill="none" stroke="currentColor" stroke-width="2.8" stroke-linecap="round" stroke-linejoin="round"><polyline points="6 9 12 15 18 9"/></svg>

</body></html>
